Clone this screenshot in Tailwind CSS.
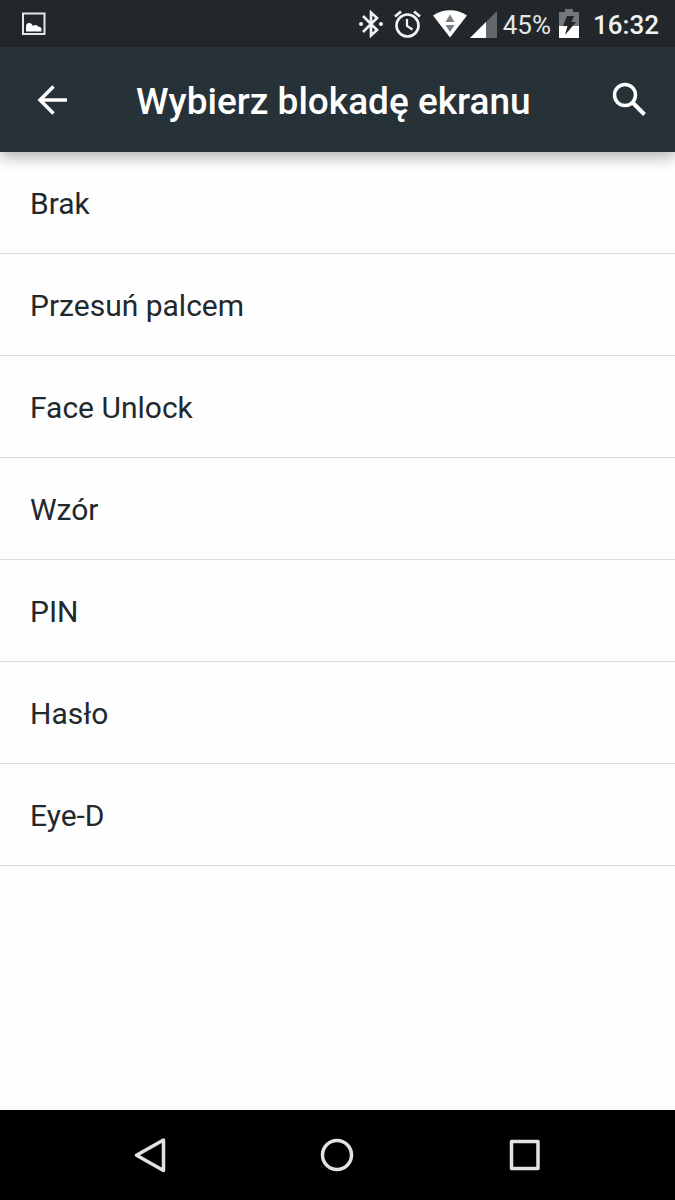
<!DOCTYPE html>
<html lang="pl">
  <head>
    <meta charset="UTF-8" />
    <meta name="viewport" content="width=device-width, initial-scale=1.0" />
    <title>Wybierz blokadę ekranu</title>
    <script src="https://cdn.jsdelivr.net/npm/@tailwindcss/browser@4"></script>
  </head>

  <body class="flex min-h-screen flex-col bg-[#fefefe] font-[Roboto,sans-serif] text-[#22292d]">
    <!-- Status bar -->
    <div class="flex h-[47px] items-center justify-between bg-[#21272b] pr-4 pl-[22px] text-white">
      <svg class="h-6 w-6" viewBox="0 0 24 24" fill="none" aria-hidden="true">
        <rect x="1" y="1.5" width="21.5" height="20.5" stroke="#e4e6e7" stroke-width="2" />
        <path d="M4 19.500v-5c0-2 1-3.500 3-3.500 2 0 3 1 4 3 1.500-1.500 4-1.500 5 .5 2 0 3.500 1 3.500 3v2z" fill="#fff" />
      </svg>

      <div class="flex items-center">
        <!-- Bluetooth -->
        <svg class="mr-2.5 h-7 w-6" viewBox="0 0 24 28" fill="none" stroke="#f2f3f3" stroke-width="2.6" aria-hidden="true">
          <path d="M4 6 18 20 12 25.500V2.500L18 8 4 22" />
          <circle cx="2" cy="14" r="2" fill="#f2f3f3" stroke="none" />
          <circle cx="22" cy="14" r="2" fill="#f2f3f3" stroke="none" />
        </svg>
        <!-- Alarm -->
        <svg class="mr-3 h-7 w-7" viewBox="0 0 28 28" fill="none" stroke="#f2f3f3" aria-hidden="true">
          <circle cx="14.5" cy="15.5" r="11" stroke-width="2.6" />
          <path d="M14 9v7l5.500 3.500" stroke-width="2.2" />
          <path d="M2 6.500 8 1.500M27 6.500 21 1.500" stroke-width="2.8" />
        </svg>
        <!-- Wi-Fi -->
        <svg class="mr-[3px] h-7 w-[34px]" viewBox="0 0 34 28" aria-hidden="true">
          <path d="M0 5.500C10-1.500 24-1.500 34 5.500L17 27.500z" fill="#fff" />
          <path d="M17 4.500 21.500 12h-9zM12.500 15h9L17 22z" fill="#7b7f82" />
        </svg>
        <!-- Mobile signal -->
        <svg class="mr-1.5 h-7 w-[27px]" viewBox="0 0 27 28" aria-hidden="true">
          <path d="M27 1v27H0z" fill="#64686b" />
          <path d="M16 12v16H0z" fill="#fff" />
        </svg>
        <span class="mr-2 pt-0.5 text-[26px] leading-8 text-[#e4e6e7]">45%</span>
        <!-- Battery -->
        <svg class="mr-3.5 h-[30px] w-5" viewBox="0 0 20 30" aria-hidden="true">
          <path d="M6 0h8v3h6v15H0V3h6z" fill="#74787a" />
          <path d="M0 17h20v12H0z" fill="#fff" />
          <path d="M8 7h7l-2.500 6H17L6 26l2.500-9H4z" fill="#21272b" />
        </svg>
        <time class="pt-0.5 text-[26px] leading-8 font-medium text-[#f2f3f3]">16:32</time>
      </div>
    </div>

    <!-- App bar -->
    <header class="z-10 flex h-[105px] items-center bg-[#273238] px-7 text-white shadow-[0_5px_14px_rgb(0_0_0/0.3)]">
      <button type="button" aria-label="Wstecz" class="flex size-12 items-center justify-center">
        <svg class="size-8" viewBox="0 0 32 32" fill="none" stroke="currentColor" stroke-width="3.5">
          <path d="M31 16H4M17.500 2.500 4 16l13.500 13.500" />
        </svg>
      </button>
      <h1 class="ml-[60px] flex-1 pt-1 text-[37px] leading-12 font-medium">Wybierz blokadę ekranu</h1>
      <button type="button" aria-label="Szukaj" class="-mr-1.5 flex size-12 items-center justify-center">
        <svg class="size-9" viewBox="0 0 36 36" fill="none" stroke="currentColor">
          <circle cx="14" cy="13" r="10.5" stroke-width="3.5" />
          <path d="M21.500 20.500 33.500 32.500" stroke-width="4" />
        </svg>
      </button>
    </header>

    <!-- Lock types -->
    <main class="flex-1">
      <ul class="text-[30px] leading-10">
        <li class="border-b border-[#dedede]"><button type="button" class="flex h-[101px] w-full items-center px-[30px] pt-0.5">Brak</button></li>
        <li class="border-b border-[#dedede]"><button type="button" class="flex h-[101px] w-full items-center px-[30px] pt-0.5">Przesuń palcem</button></li>
        <li class="border-b border-[#dedede]"><button type="button" class="flex h-[101px] w-full items-center px-[30px] pt-0.5">Face Unlock</button></li>
        <li class="border-b border-[#dedede]"><button type="button" class="flex h-[101px] w-full items-center px-[30px] pt-0.5">Wzór</button></li>
        <li class="border-b border-[#dedede]"><button type="button" class="flex h-[101px] w-full items-center px-[30px] pt-0.5">PIN</button></li>
        <li class="border-b border-[#dedede]"><button type="button" class="flex h-[101px] w-full items-center px-[30px] pt-0.5">Hasło</button></li>
        <li class="border-b border-[#dedede]"><button type="button" class="flex h-[101px] w-full items-center px-[30px] pt-0.5">Eye-D</button></li>
      </ul>
    </main>

    <!-- Navigation bar -->
    <nav class="grid h-[90px] grid-cols-3 bg-black px-14 text-[#e2e2e2]">
      <button type="button" aria-label="Wstecz" class="flex items-center justify-center">
        <svg class="size-9" viewBox="0 0 36 36" fill="none" stroke="currentColor" stroke-width="3.5" stroke-linejoin="round">
          <path d="M31.500 3v30.500L4.500 18.200z" />
        </svg>
      </button>
      <button type="button" aria-label="Ekran główny" class="flex items-center justify-center">
        <svg class="size-9" viewBox="0 0 36 36" fill="none" stroke="currentColor" stroke-width="3.5">
          <circle cx="18" cy="18" r="14.5" />
        </svg>
      </button>
      <button type="button" aria-label="Ostatnie aplikacje" class="flex items-center justify-center">
        <svg class="size-9" viewBox="0 0 36 36" fill="none" stroke="currentColor" stroke-width="3.5" stroke-linejoin="round">
          <rect x="4.5" y="4.5" width="26.5" height="27" />
        </svg>
      </button>
    </nav>
  </body>
</html>
